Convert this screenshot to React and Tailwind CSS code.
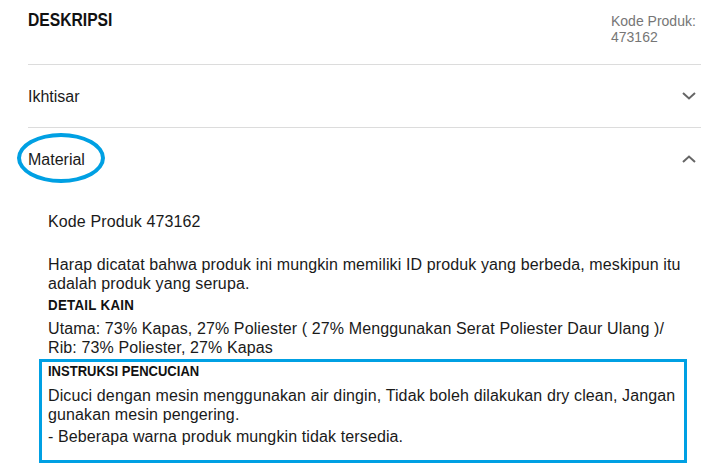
import React from 'react';

const Chevron = ({ up }) => (
  <svg width="14" height="8" viewBox="0 0 14 8" className="block">
    <polyline
      points={up ? '1,7 7,1.5 13,7' : '1,1 7,6.5 13,1'}
      fill="none"
      stroke="#666"
      strokeWidth="2"
    />
  </svg>
);

function AccordionRow({ title, open }) {
  return (
    <div className="flex h-[62px] items-center justify-between pr-[5px]">
      <span className="text-[16px] leading-[19px] text-[#1a1a1a]">{title}</span>
      <Chevron up={open} />
    </div>
  );
}

export default function App() {
  return (
    <div
      className="relative h-[473px] w-[712px] overflow-hidden bg-white"
      style={{ fontFamily: '"Liberation Sans", Arial, sans-serif' }}
    >
      <div className="ml-[28px] w-[673px]">
        {/* header */}
        <div className="flex h-[64px] items-start justify-between pt-[9px]">
          <h2 className="origin-left scale-x-[0.87] text-[18px] font-bold uppercase leading-[22px] text-[#111]">
            DESKRIPSI
          </h2>
          <div className="mt-[4px] w-[90px] text-[14px] leading-[16px] text-[#767676]">
            Kode Produk:
            <br />
            473162
          </div>
        </div>

        <div className="border-t border-[#dcdcdc]">
          <AccordionRow title="Ikhtisar" />
        </div>
        <div className="border-t border-[#dcdcdc]">
          <AccordionRow title="Material" open />
        </div>

        {/* material content */}
        <div className="w-[655px] pl-[20px] pt-[22px] text-[16px] leading-[19px] tracking-[0.12px] text-[#1a1a1a]">
          <p>Kode Produk 473162</p>
          <p className="mt-[24px]">
            Harap dicatat bahwa produk ini mungkin memiliki ID produk yang berbeda, meskipun itu
            <br />
            adalah produk yang serupa.
          </p>
          <h3 className="mt-[3px] origin-left scale-x-[0.95] text-[14px] font-bold uppercase leading-[19px] tracking-[0.3px] text-[#111]">
            Detail Kain
          </h3>
          <p className="mt-[4px]">
            Utama: 73% Kapas, 27% Poliester ( 27% Menggunakan Serat Poliester Daur Ulang )/
            <br />
            Rib: 73% Poliester, 27% Kapas
          </p>
          <h3 className="mt-[5px] origin-left scale-x-[0.93] text-[14px] font-bold uppercase leading-[19px] tracking-normal text-[#111]">
            Instruksi Pencucian
          </h3>
          <p className="mt-[5px]">
            Dicuci dengan mesin menggunakan air dingin, Tidak boleh dilakukan dry clean, Jangan
            <br />
            gunakan mesin pengering.
          </p>
          <p className="mt-[3px]">- Beberapa warna produk mungkin tidak tersedia.</p>
        </div>
      </div>

      {/* annotation marks */}
      <div className="pointer-events-none absolute left-[17px] top-[133px] h-[50px] w-[88px] rounded-[50%] border-4 border-[#00a0e3]" />
      <div className="pointer-events-none absolute left-[39px] top-[359px] h-[104px] w-[648px] border-[3px] border-[#00a0e3]" />
    </div>
  );
}
